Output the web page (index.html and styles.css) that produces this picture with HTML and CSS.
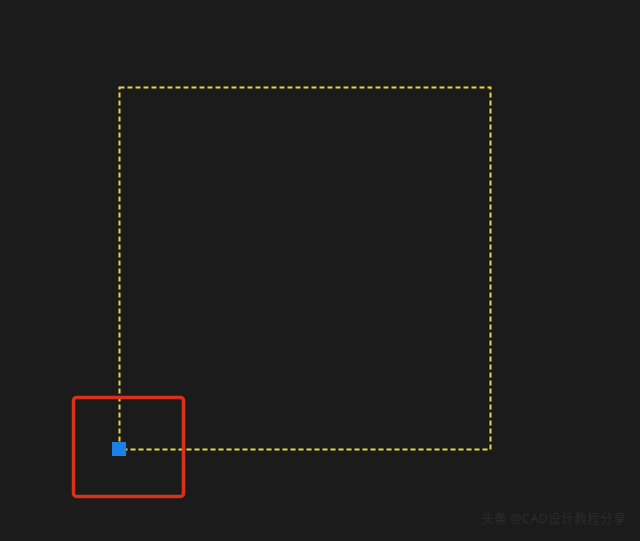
FILE: index.html
```html
<!DOCTYPE html>
<html>
<head>
  <title>Canvas</title>
  <link rel="stylesheet" href="styles.css">
</head>
<body>
  <div class="canvas">
    <svg class="drawing" width="640" height="541" viewBox="0 0 640 541">
      <!-- dashed selection box -->
      <rect class="dash-box" x="119.5" y="87.5" width="371" height="362"></rect>
      <!-- base point -->
      <rect class="grip" x="112" y="442" width="14" height="14"></rect>
      <!-- highlight -->
      <rect class="mark" x="73.5" y="397.5" width="110" height="99" rx="3"></rect>
    </svg>
    <div class="watermark">
      <span>头条 @CAD设计教程分享</span>
    </div>
  </div>
</body>
</html>
```

FILE: styles.css
```css
body {
  margin: 0;
  background-color: #1b1b1b;
  font-family: "Noto Sans", "Noto Sans CJK SC", sans-serif;
}
.canvas {
  position: relative;
  width: 640px;
  height: 541px;
  overflow: hidden;
}
.drawing {
  display: block;
}
.dash-box {
  fill: none;
  stroke: #e6d44a;
  stroke-width: 2;
  stroke-dasharray: 5 3;
}
.grip {
  fill: #1a80ea;
}
.mark {
  fill: none;
  stroke: #d8321c;
  stroke-width: 3.5;
}
.watermark {
  position: absolute;
  right: 14px;
  bottom: 14px;
  color: #2c2c2c;
  font-size: 13px;
}
```
